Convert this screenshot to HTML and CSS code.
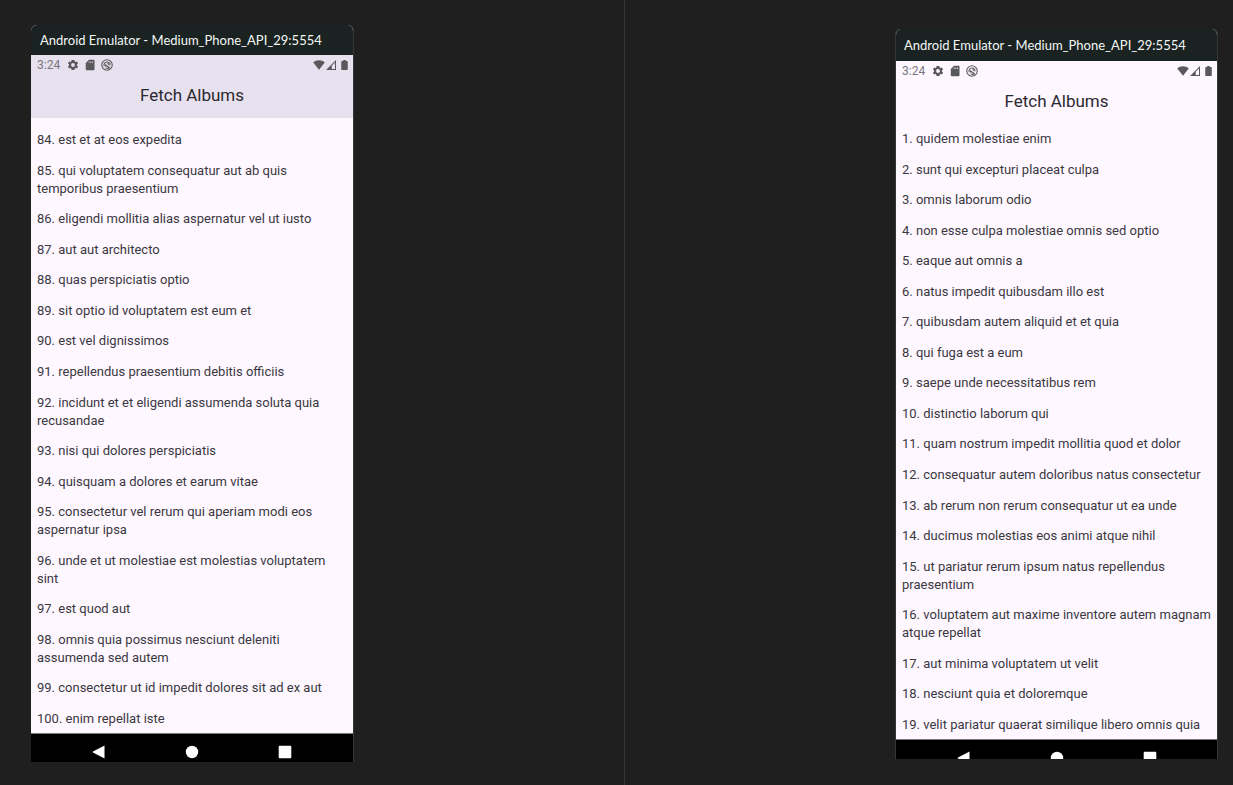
FILE: index.html
```html
<!DOCTYPE html>
<html lang="en">
<head>
<meta charset="utf-8">
<title>Fetch Albums</title>
<link rel="stylesheet" href="styles.css">
</head>
<body>
<svg class="sprite" aria-hidden="true">
  <symbol id="gear" viewBox="0 0 24 24"><path fill-rule="evenodd" d="M19.800 13.200a7.500 7.500 0 0 0 0-2.400l2.300-1.800-2.200-3.900-2.700 1.100a7.500 7.500 0 0 0-1.700-1L15 2H9l-.5 3.200a7.500 7.500 0 0 0-1.700 1L4.100 5.100 1.900 9l2.300 1.800a7.500 7.500 0 0 0 0 2.400L1.900 15l2.200 3.900 2.700-1.100a7.500 7.500 0 0 0 1.700 1L9 22h6l.5-3.200a7.500 7.500 0 0 0 1.700-1l2.700 1.100 2.200-3.900zM12 15.800a3.800 3.800 0 1 1 0-7.600 3.800 3.800 0 0 1 0 7.600z"/></symbol>
  <symbol id="sd" viewBox="0 0 24 24"><path fill-rule="evenodd" d="M19.500 1.500H10L3.500 8v12.500a2 2 0 0 0 2 2h14a1.500 1.500 0 0 0 1.500-1.500V3a1.500 1.500 0 0 0-1.500-1.500zM9.500 5H11v3H9.500zm3.500 0h1.500v3H13zm3.500 0H18v3h-1.500z"/></symbol>
  <symbol id="sync" viewBox="0 0 24 24"><circle cx="12" cy="12" r="10.500" fill="none" stroke="currentColor" stroke-width="2.200"/><path d="M6.500 14.500A6 6 0 0 1 12 6a6 6 0 0 1 6 6.500M17.500 17a6.500 6.500 0 0 1-8 .5" fill="none" stroke="currentColor" stroke-width="2.200"/><path d="M8 10l10 6.500-2.500 1.500-4.500-3.500-3 1zM11.500 8.500l5 .5v4z"/></symbol>
  <symbol id="wifi" viewBox="0 0 24 20"><path d="M12 19.500L.5 5C3.500 2 7.500.5 12 .5S20.500 2 23.500 5z"/></symbol>
  <symbol id="signal" viewBox="0 0 20 20"><path fill-rule="evenodd" d="M0 20L20 0v20zM11.500 18H18V5l-6.500 6.500z"/></symbol>
  <symbol id="battery" viewBox="0 0 14 20"><path d="M4.500 0h5v2H12a1.500 1.500 0 0 1 1.500 1.500v15A1.500 1.500 0 0 1 12 20H2A1.500 1.500 0 0 1 .5 18.500v-15A1.500 1.500 0 0 1 2 2h2.500z"/></symbol>
  <symbol id="back" viewBox="0 0 14 14"><path d="M12.500.5v13L1 7.600Q.3 7 1 6.400z"/></symbol>
  <symbol id="home" viewBox="0 0 14 14"><circle cx="7" cy="7" r="6.200"/></symbol>
  <symbol id="recent" viewBox="0 0 14 14"><rect x=".7" y=".7" width="12.600" height="12.600" rx="1"/></symbol>
</svg>
<main class="workspace">
  <section class="pane pane-left">
    <article class="phone">
      <div class="window-title">Android Emulator - Medium_Phone_API_29:5554</div>
      <header class="app-bar scrolled">
        <div class="status"><span class="clock">3:24</span><svg class="icon"><use href="#gear"/></svg><svg class="icon"><use href="#sd"/></svg><svg class="icon"><use href="#sync"/></svg><span class="system"><svg class="wifi"><use href="#wifi"/></svg><svg class="signal"><use href="#signal"/></svg><svg class="battery"><use href="#battery"/></svg></span></div>
        <h1>Fetch Albums</h1>
      </header>
      <ul class="albums">
        <li>84. est et at eos expedita</li>
        <li>85. qui voluptatem consequatur aut ab quis<br>temporibus praesentium</li>
        <li>86. eligendi mollitia alias aspernatur vel ut iusto</li>
        <li>87. aut aut architecto</li>
        <li>88. quas perspiciatis optio</li>
        <li>89. sit optio id voluptatem est eum et</li>
        <li>90. est vel dignissimos</li>
        <li>91. repellendus praesentium debitis officiis</li>
        <li>92. incidunt et et eligendi assumenda soluta quia<br>recusandae</li>
        <li>93. nisi qui dolores perspiciatis</li>
        <li>94. quisquam a dolores et earum vitae</li>
        <li>95. consectetur vel rerum qui aperiam modi eos<br>aspernatur ipsa</li>
        <li>96. unde et ut molestiae est molestias voluptatem<br>sint</li>
        <li>97. est quod aut</li>
        <li>98. omnis quia possimus nesciunt deleniti<br>assumenda sed autem</li>
        <li>99. consectetur ut id impedit dolores sit ad ex aut</li>
        <li>100. enim repellat iste</li>
      </ul>
      <nav class="nav-bar">
        <button aria-label="Back"><svg><use href="#back"/></svg></button>
        <button aria-label="Home"><svg><use href="#home"/></svg></button>
        <button aria-label="Recent apps"><svg><use href="#recent"/></svg></button>
      </nav>
    </article>
  </section>
  <section class="pane pane-right">
    <article class="phone">
      <div class="window-title">Android Emulator - Medium_Phone_API_29:5554</div>
      <header class="app-bar">
        <div class="status"><span class="clock">3:24</span><svg class="icon"><use href="#gear"/></svg><svg class="icon"><use href="#sd"/></svg><svg class="icon"><use href="#sync"/></svg><span class="system"><svg class="wifi"><use href="#wifi"/></svg><svg class="signal"><use href="#signal"/></svg><svg class="battery"><use href="#battery"/></svg></span></div>
        <h1>Fetch Albums</h1>
      </header>
      <ul class="albums">
        <li>1. quidem molestiae enim</li>
        <li>2. sunt qui excepturi placeat culpa</li>
        <li>3. omnis laborum odio</li>
        <li>4. non esse culpa molestiae omnis sed optio</li>
        <li>5. eaque aut omnis a</li>
        <li>6. natus impedit quibusdam illo est</li>
        <li>7. quibusdam autem aliquid et et quia</li>
        <li>8. qui fuga est a eum</li>
        <li>9. saepe unde necessitatibus rem</li>
        <li>10. distinctio laborum qui</li>
        <li>11. quam nostrum impedit mollitia quod et dolor</li>
        <li>12. consequatur autem doloribus natus consectetur</li>
        <li>13. ab rerum non rerum consequatur ut ea unde</li>
        <li>14. ducimus molestias eos animi atque nihil</li>
        <li>15. ut pariatur rerum ipsum natus repellendus<br>praesentium</li>
        <li>16. voluptatem aut maxime inventore autem magnam<br>atque repellat</li>
        <li>17. aut minima voluptatem ut velit</li>
        <li>18. nesciunt quia et doloremque</li>
        <li>19. velit pariatur quaerat similique libero omnis quia</li>
      </ul>
      <nav class="nav-bar cropped">
        <button aria-label="Back"><svg><use href="#back"/></svg></button>
        <button aria-label="Home"><svg><use href="#home"/></svg></button>
        <button aria-label="Recent apps"><svg><use href="#recent"/></svg></button>
      </nav>
    </article>
  </section>
</main>
</body>
</html>
```
FILE: styles.css
```css
* { box-sizing: border-box; }
body { margin: 0; background: #1f1f1f; font-family: Roboto, sans-serif; }
.sprite { display: none; }
svg { display: block; fill: currentColor; }
.workspace { display: grid; grid-template-columns: 625fr 608fr; min-height: 100vh; }
.pane { display: flex; }
.pane-left { padding: 25px 31px 23px; border-right: 1px solid #383838; }
.pane-right { justify-content: flex-end; padding: 29px 15px 26px; }
.phone {
  display: flex;
  flex-direction: column;
  width: 323px;
  border: solid #343838;
  border-width: 0 1px;
  border-radius: 6px 6px 0 0;
  overflow: hidden;
  background: #fef7ff;
}
.pane-left .phone { border-left: 0; }
.window-title {
  height: 30px;
  padding-left: 9px;
  background: #1a2321;
  color: #f4f6f5;
  font: 13px/30px Lato, sans-serif;
  white-space: nowrap;
}
.pane-right .window-title { height: 32px; padding-left: 8px; line-height: 32px; }
.app-bar { height: 62px; color: #2b292f; }
.app-bar.scrolled { height: 63px; background: #e7e0ee; }
.status { display: flex; align-items: center; gap: 5px; height: 19px; padding: 0 5px 0 6px; color: #59585b; }
.clock { margin-right: 2px; font-size: 12px; color: #79757d; }
.icon { width: 12px; height: 12px; }
.system { display: flex; align-items: center; margin-left: auto; }
.wifi { width: 12px; height: 10px; margin-right: 1px; }
.signal { width: 10px; height: 10px; margin-right: 5px; }
.battery { width: 7px; height: 10px; }
h1 { margin: 0; font-size: 17px; line-height: 43px; font-weight: 400; text-align: center; }
.albums {
  display: flex;
  flex: 1;
  flex-direction: column;
  justify-content: space-between;
  margin: 0;
  padding: 13px 6px 5px;
  list-style: none;
  color: #3b383f;
  font-size: 13px;
  line-height: 18px;
  white-space: nowrap;
}
.pane-right .albums { padding-top: 7px; }
.nav-bar {
  display: flex;
  justify-content: center;
  gap: 79px;
  height: 29px;
  padding-top: 11px;
  border-top: 1px solid #777;
  background: #000;
  overflow: hidden;
}
.nav-bar.cropped { height: 20px; }
.nav-bar button { flex: none; height: 14px; margin: 0; padding: 0; border: 0; background: none; color: #fff; }
.nav-bar svg { width: 14px; height: 14px; }
```
